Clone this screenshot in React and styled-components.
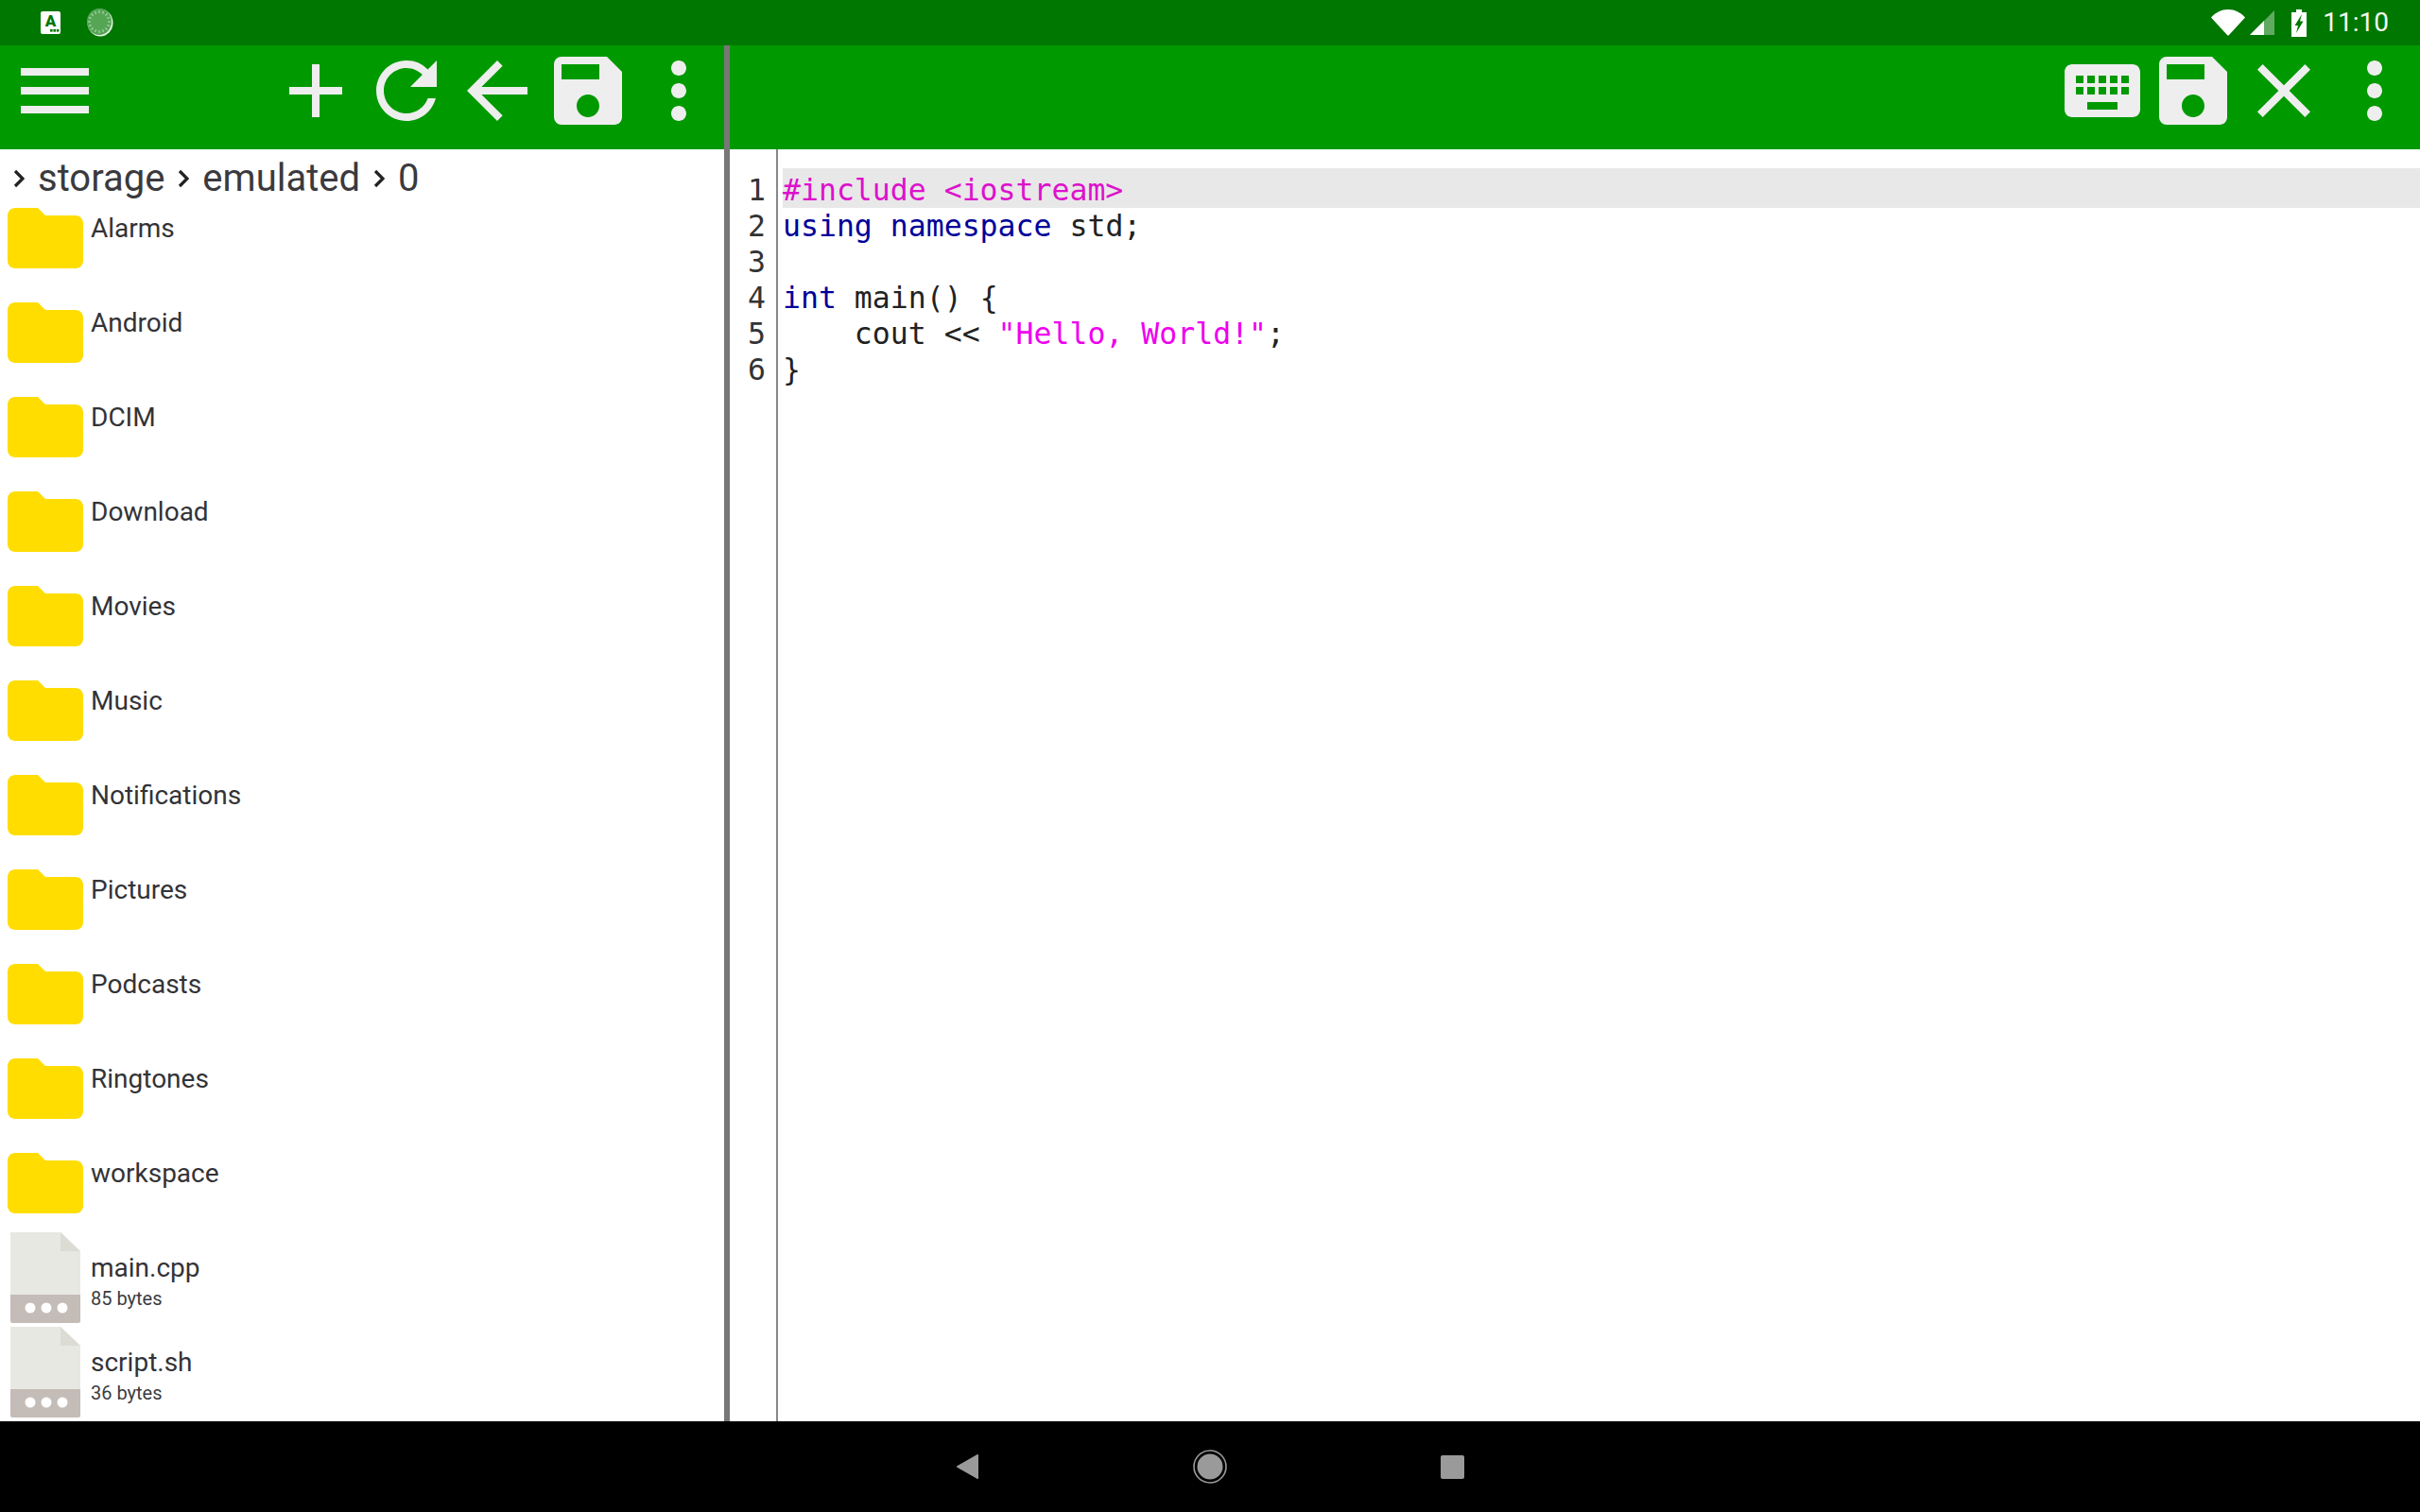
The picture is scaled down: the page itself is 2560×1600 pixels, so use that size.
import React from "react";
import styled, { createGlobalStyle } from "styled-components";
import {
  MdAdd,
  MdArrowBack,
  MdClose,
  MdFolder,
  MdKeyboard,
  MdMenu,
  MdMoreVert,
  MdRefresh,
  MdSave,
} from "react-icons/md";

const GlobalStyle = createGlobalStyle`
  html, body {
    margin: 0;
    padding: 0;
    background: #000;
  }
  * {
    box-sizing: border-box;
  }
`;

const Screen = styled.div`
  width: 2560px;
  height: 1600px;
  display: flex;
  flex-direction: column;
  overflow: hidden;
  background: #fff;
  font-family: Roboto, "Liberation Sans", sans-serif;
`;

const StatusBar = styled.div`
  height: 48px;
  flex: none;
  display: flex;
  align-items: center;
  background: #007700;
  color: #fff;
`;
const NotifyIcons = styled.div`
  display: flex;
  align-items: center;
  gap: 28px;
  padding-left: 43px;
`;
const StatusIcons = styled.div`
  margin-left: auto;
  display: flex;
  align-items: center;
  padding-right: 33px;
`;
const StatusTime = styled.span`
  font-size: 28px;
  line-height: 48px;
  margin-left: 17px;
  color: #f2f8f2;
`;
const StatusSvg = styled.svg`
  display: block;
  flex: none;
  margin-left: ${(props) => props.$gap || 0}px;
`;

const Workspace = styled.div`
  flex: 1;
  display: flex;
  min-height: 0;
`;
const LeftPane = styled.div`
  width: 766px;
  flex: none;
  display: flex;
  flex-direction: column;
`;
const Divider = styled.div`
  width: 6px;
  flex: none;
  background: #777;
`;
const RightPane = styled.div`
  flex: 1;
  display: flex;
  flex-direction: column;
  min-width: 0;
`;

const Toolbar = styled.div`
  height: 110px;
  flex: none;
  display: flex;
  background: #009900;
  padding-left: ${(props) => props.$inset || 0}px;
`;
const ToolGroup = styled.div`
  display: flex;
  margin-left: auto;
`;
const ToolIcon = styled.div`
  width: 96px;
  height: 96px;
  color: #eeeeee;
  svg {
    display: block;
    width: 96px;
    height: 96px;
  }
`;

const Breadcrumb = styled.div`
  height: 46px;
  flex: none;
  display: flex;
  align-items: center;
  gap: 14px;
  padding: 16px 0 0 14px;
  font-size: 40px;
  line-height: 30px;
  color: #3a3a3e;
`;

const FileList = styled.div`
  flex: 1;
  min-height: 0;
  overflow: hidden;
`;
const FileRow = styled.div`
  height: 100px;
  display: flex;
`;
const FileGlyph = styled.div`
  width: 96px;
  height: 96px;
  flex: none;
  color: #ffdd00;
  svg {
    display: block;
    width: 96px;
    height: 96px;
  }
`;
const FileText = styled.div`
  padding-top: 20px;
`;
const FileName = styled.div`
  font-size: 28px;
  line-height: 36px;
  color: #333337;
`;
const FileSize = styled.div`
  font-size: 20px;
  line-height: 29px;
  color: #3c3c40;
`;

const Editor = styled.div`
  flex: 1;
  display: flex;
  min-height: 0;
  font-family: "DejaVu Sans Mono", "Liberation Mono", monospace;
  font-size: 31.5px;
  color: #222;
`;
const Gutter = styled.div`
  width: 51px;
  flex: none;
  border-right: 2px solid #888;
  padding: 24px 11px 0 0;
  text-align: right;
  color: #333;
`;
const LineNumber = styled.div`
  height: 38px;
  line-height: 38px;
`;
const CodeArea = styled.div`
  flex: 1;
  min-width: 0;
  padding: 20px 0 0 5px;
`;
const CodeLine = styled.div`
  height: ${(props) => (props.$active ? 42 : 38)}px;
  line-height: 38px;
  white-space: pre;
  padding-top: ${(props) => (props.$active ? 4 : 0)}px;
  background: ${(props) => (props.$active ? "#e8e8e8" : "transparent")};
`;
const Preproc = styled.span`
  color: #dd11cc;
`;
const Keyword = styled.span`
  color: #000099;
`;
const Str = styled.span`
  color: #ee00ee;
`;

const NavBar = styled.div`
  height: 96px;
  flex: none;
  background: #000;
  display: flex;
  align-items: center;
  justify-content: center;
  gap: 226px;
`;

const Chevron = () => (
  <svg width="12" height="20" viewBox="0 0 12 20" style={{ flex: "none" }}>
    <path d="M2 2l8 8-8 8" fill="none" stroke="#222" strokeWidth="3.2" />
  </svg>
);

const FolderIcon = () => (
  <FileGlyph>
    <MdFolder />
  </FileGlyph>
);

const DocIcon = () => (
  <FileGlyph>
    <svg viewBox="0 0 96 96">
      <path d="M11 0h53l21 20v46H11z" fill="#e8e8e2" />
      <path d="M64 0l21 20H64z" fill="#dcdcd4" />
      <path d="M11 66h74v28a2 2 0 0 1-2 2H13a2 2 0 0 1-2-2z" fill="#c4bcb6" />
      <circle cx="32" cy="80" r="5.5" fill="#fff" />
      <circle cx="49" cy="80" r="5.5" fill="#fff" />
      <circle cx="66" cy="80" r="5.5" fill="#fff" />
    </svg>
  </FileGlyph>
);

const folders = [
  "Alarms",
  "Android",
  "DCIM",
  "Download",
  "Movies",
  "Music",
  "Notifications",
  "Pictures",
  "Podcasts",
  "Ringtones",
  "workspace",
];

const files = [
  { name: "main.cpp", size: "85 bytes" },
  { name: "script.sh", size: "36 bytes" },
];

const ticks = Array.from({ length: 16 }, (_, i) => (i * 360) / 16);

const App = () => {
  return (
    <Screen>
      <GlobalStyle />
      <StatusBar>
        <NotifyIcons>
          <svg width="21" height="24" viewBox="0 0 21 24">
            <rect width="21" height="24" rx="2" fill="#fff" />
            <text
              x="10.5"
              y="16"
              textAnchor="middle"
              fontFamily="Roboto"
              fontWeight="900"
              fontSize="17"
              fill="#007700"
            >
              A
            </text>
            <rect x="10" y="19" width="2.6" height="2.6" fill="#007700" />
            <rect x="13.4" y="19" width="2.6" height="2.6" fill="#007700" />
            <rect x="16.8" y="19" width="2.6" height="2.6" fill="#007700" />
          </svg>
          <svg width="28" height="30" viewBox="0 0 28 30">
            <ellipse cx="14" cy="15" rx="13.5" ry="14.5" fill="#e4f2e4" />
            <ellipse cx="13" cy="14" rx="13" ry="14" fill="#55a555" />
            {ticks.map((deg) => (
              <line
                key={deg}
                x1="13"
                y1="2"
                x2="13"
                y2="5"
                stroke="#a8d4a8"
                strokeWidth="1.2"
                transform={`rotate(${deg} 13 14)`}
              />
            ))}
          </svg>
        </NotifyIcons>
        <StatusIcons>
          <StatusSvg width="36" height="28" viewBox="0 0 36 28">
            <path
              d="M0 8.5C5 3 11 0 18 0s13 3 18 8.500L19 27a1.400 1.400 0 0 1-2 0z"
              fill="#fff"
            />
          </StatusSvg>
          <StatusSvg $gap={5} width="26" height="26" viewBox="0 0 26 26">
            <path d="M26 0v26H0z" fill="#fff" fillOpacity="0.38" />
            <path d="M15 11v15H0z" fill="#fff" />
          </StatusSvg>
          <StatusSvg $gap={18} width="16" height="29" viewBox="0 0 16 29">
            <path d="M5 0h6v3h5v26H0V3h5z" fill="#fff" />
            <path d="M11 5L3.500 17h3.500l-2 8 7.500-12.500h-3.500z" fill="#007700" />
          </StatusSvg>
          <StatusTime>11:10</StatusTime>
        </StatusIcons>
      </StatusBar>
      <Workspace>
        <LeftPane>
          <Toolbar $inset={10}>
            <ToolIcon>
              <MdMenu />
            </ToolIcon>
            <ToolGroup>
              <ToolIcon>
                <MdAdd />
              </ToolIcon>
              <ToolIcon>
                <MdRefresh />
              </ToolIcon>
              <ToolIcon>
                <MdArrowBack />
              </ToolIcon>
              <ToolIcon>
                <MdSave />
              </ToolIcon>
              <ToolIcon>
                <MdMoreVert />
              </ToolIcon>
            </ToolGroup>
          </Toolbar>
          <Breadcrumb>
            <Chevron />
            <span>storage</span>
            <Chevron />
            <span>emulated</span>
            <Chevron />
            <span>0</span>
          </Breadcrumb>
          <FileList>
            {folders.map((name) => (
              <FileRow key={name}>
                <FolderIcon />
                <FileText>
                  <FileName>{name}</FileName>
                </FileText>
              </FileRow>
            ))}
            {files.map((file) => (
              <FileRow key={file.name}>
                <DocIcon />
                <FileText>
                  <FileName>{file.name}</FileName>
                  <FileSize>{file.size}</FileSize>
                </FileText>
              </FileRow>
            ))}
          </FileList>
        </LeftPane>
        <Divider />
        <RightPane>
          <Toolbar>
            <ToolGroup>
              <ToolIcon>
                <MdKeyboard />
              </ToolIcon>
              <ToolIcon>
                <MdSave />
              </ToolIcon>
              <ToolIcon>
                <MdClose />
              </ToolIcon>
              <ToolIcon>
                <MdMoreVert />
              </ToolIcon>
            </ToolGroup>
          </Toolbar>
          <Editor>
            <Gutter>
              {[1, 2, 3, 4, 5, 6].map((n) => (
                <LineNumber key={n}>{n}</LineNumber>
              ))}
            </Gutter>
            <CodeArea>
              <CodeLine $active>
                <Preproc>{"#include <iostream>"}</Preproc>
              </CodeLine>
              <CodeLine>
                <Keyword>using</Keyword> <Keyword>namespace</Keyword> std;
              </CodeLine>
              <CodeLine> </CodeLine>
              <CodeLine>
                <Keyword>int</Keyword> main() {"{"}
              </CodeLine>
              <CodeLine>
                {"    cout << "}
                <Str>"Hello, World!"</Str>;
              </CodeLine>
              <CodeLine>{"}"}</CodeLine>
            </CodeArea>
          </Editor>
        </RightPane>
      </Workspace>
      <NavBar>
        <svg width="24" height="26" viewBox="0 0 24 26">
          <path
            d="M23 1v24a1 1 0 0 1-1.500.8L1 14a1 1 0 0 1 0-2L21.500.2A1 1 0 0 1 23 1z"
            fill="#9a9a9a"
          />
        </svg>
        <svg width="36" height="36" viewBox="0 0 36 36">
          <circle cx="18" cy="18" r="17" fill="none" stroke="#9a9a9a" strokeWidth="1.600" />
          <circle cx="18" cy="18" r="13.500" fill="#9a9a9a" />
        </svg>
        <svg width="25" height="25" viewBox="0 0 25 25">
          <rect width="25" height="25" rx="2" fill="#9a9a9a" />
        </svg>
      </NavBar>
    </Screen>
  );
};

export default App;
